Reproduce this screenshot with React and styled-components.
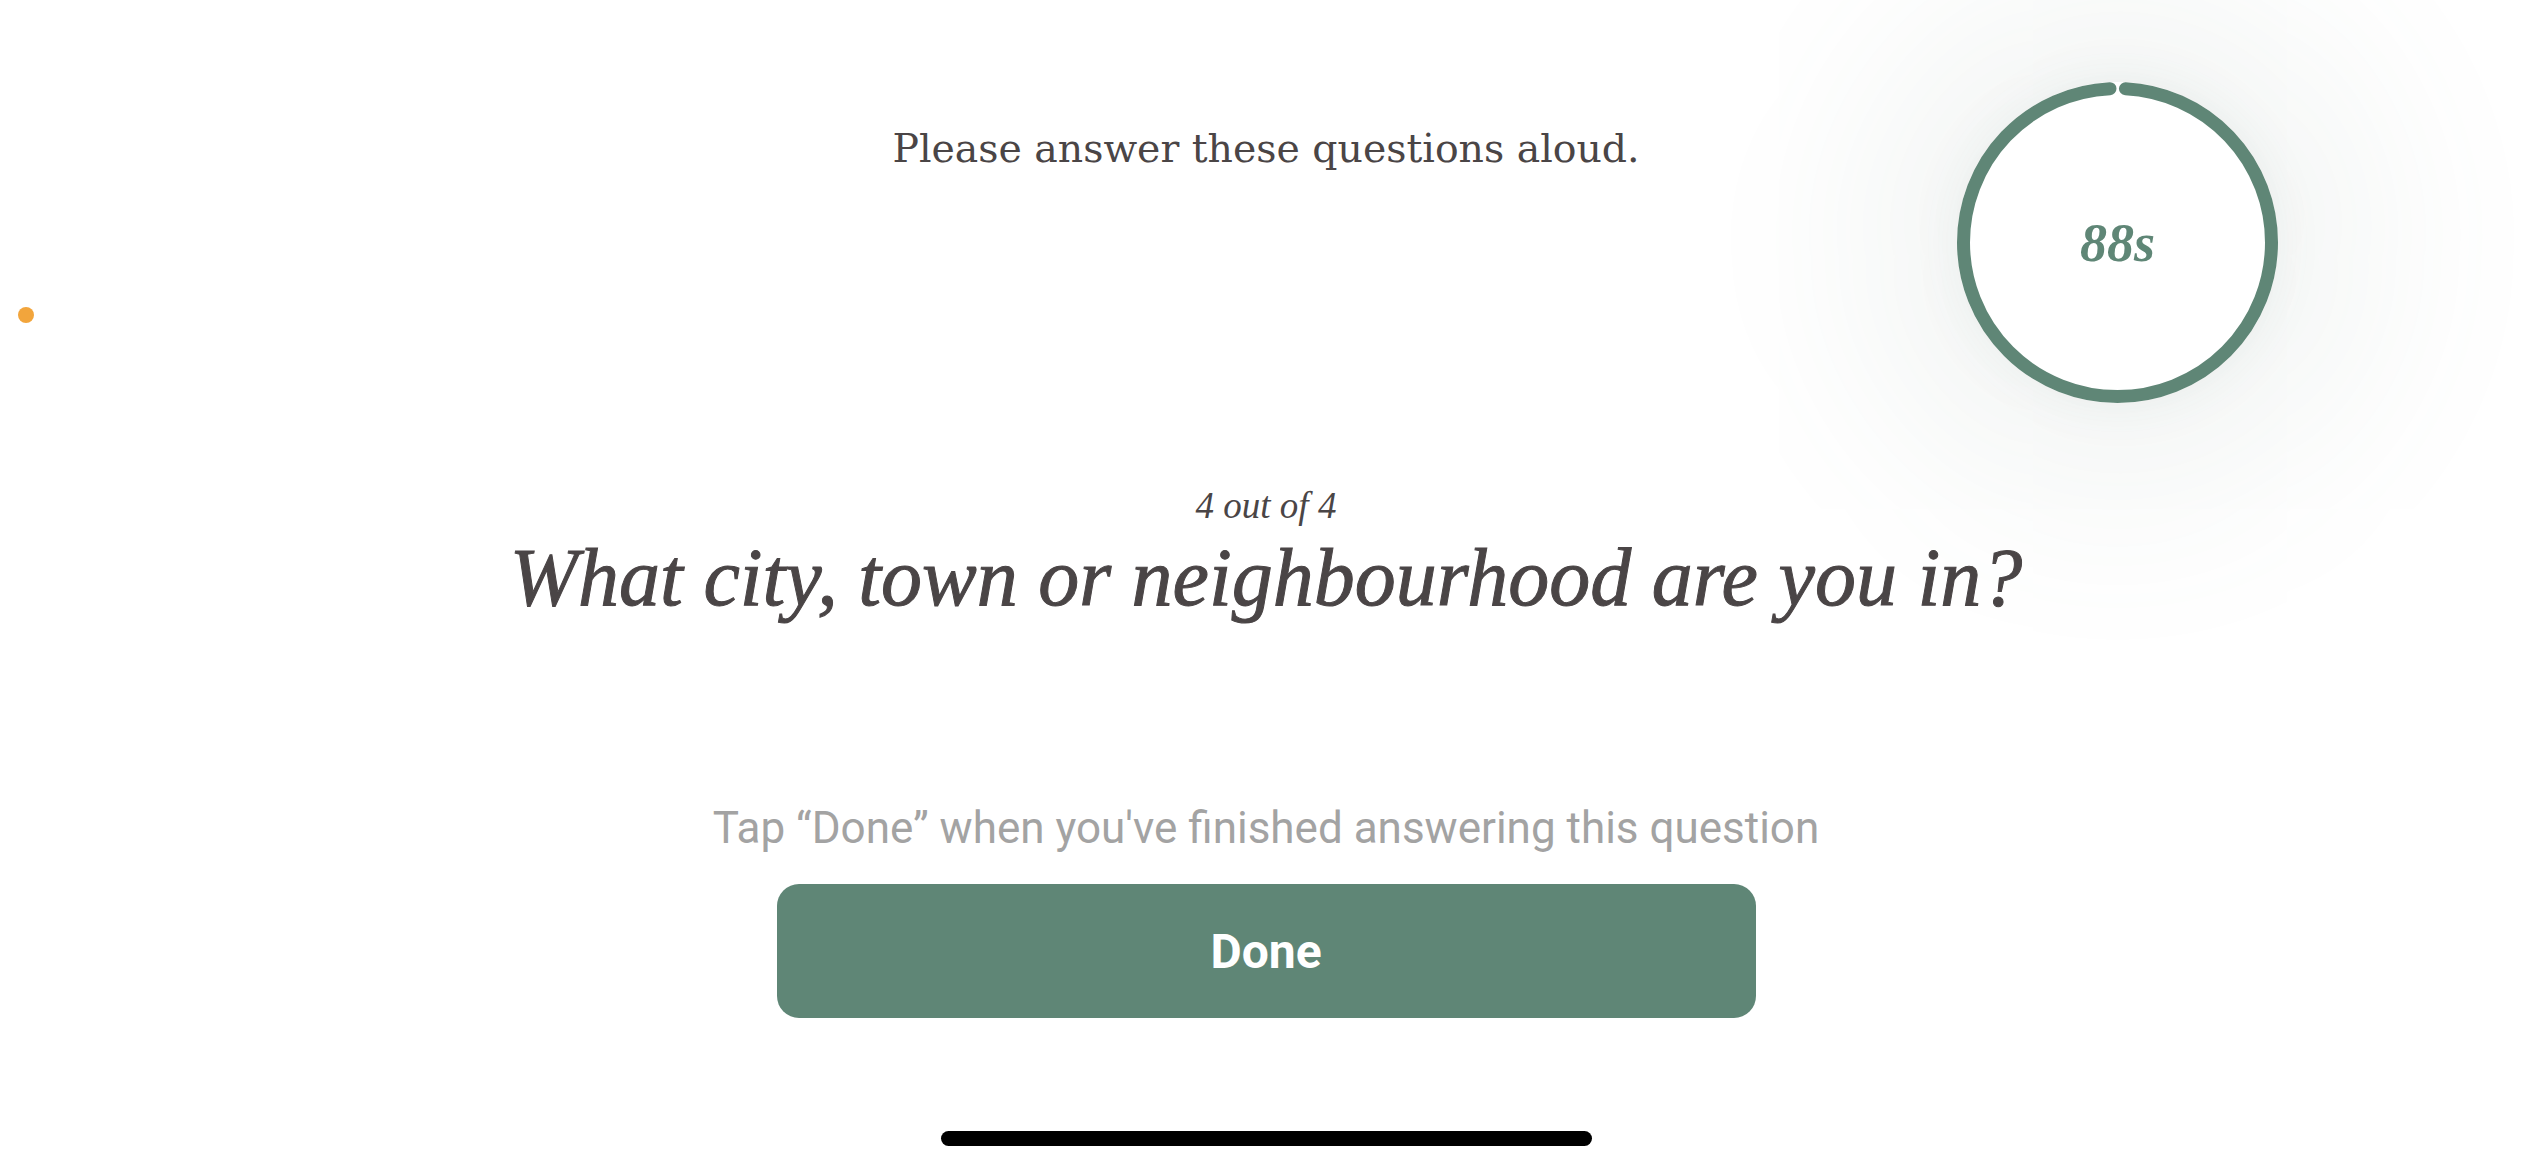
import React from "react";
import styled, { createGlobalStyle } from "styled-components";

const GlobalStyle = createGlobalStyle`
  html, body {
    margin: 0;
    padding: 0;
    background: #ffffff;
  }
  #root {
    height: 100vh;
  }
`;

const Screen = styled.div`
  position: relative;
  width: 2532px;
  height: 1170px;
  overflow: hidden;
  background: #fff;
  display: flex;
  flex-direction: column;
  align-items: center;
`;

const Intro = styled.p`
  margin: 120px 0 0;
  font-family: "DejaVu Serif", "Liberation Serif", serif;
  font-size: 39.4px;
  line-height: 56px;
  color: #4a4546;
`;

const QuestionBlock = styled.div`
  margin-top: 308px;
  display: flex;
  flex-direction: column;
  align-items: center;
`;

const Counter = styled.span`
  font-family: "Liberation Serif", "DejaVu Serif", serif;
  font-style: italic;
  font-size: 37px;
  line-height: 44px;
  color: #4a4546;
`;

const Question = styled.h1`
  margin: 0;
  font-family: "Liberation Serif", "DejaVu Serif", serif;
  font-style: italic;
  font-weight: 400;
  font-size: 82px;
  line-height: 100px;
  color: #4a4546;
  -webkit-text-stroke: 1px #4a4546;
`;

const Hint = styled.p`
  margin: 174px 0 0;
  font-family: Roboto, "Liberation Sans", sans-serif;
  font-size: 44px;
  line-height: 52px;
  color: #a3a3a3;
`;

const DoneButton = styled.button`
  margin-top: 30px;
  width: 979px;
  height: 134px;
  border: none;
  border-radius: 22px;
  background: #5f8676;
  color: #fff;
  font-family: Roboto, "Liberation Sans", sans-serif;
  font-weight: 700;
  font-size: 48px;
  cursor: pointer;
`;

const HomeIndicator = styled.div`
  margin-top: auto;
  margin-bottom: 24px;
  width: 651px;
  height: 15px;
  border-radius: 8px;
  background: #000;
`;

const Dot = styled.span`
  position: absolute;
  left: 18px;
  top: 307px;
  width: 16px;
  height: 16px;
  border-radius: 50%;
  background: #f2a53c;
`;

const Timer = styled.div`
  position: absolute;
  left: 1957px;
  top: 82px;
  width: 321px;
  height: 321px;
  border-radius: 50%;
  background: #fff;
  box-shadow: 0 0 40px 10px rgba(95, 125, 110, 0.05),
    0 0 180px 110px rgba(95, 125, 110, 0.07);
  display: flex;
  align-items: center;
  justify-content: center;

  svg {
    position: absolute;
    inset: 0;
  }
`;

const TimerLabel = styled.span`
  position: relative;
  font-family: "Liberation Serif", "DejaVu Serif", serif;
  font-style: italic;
  font-weight: 700;
  font-size: 54px;
  color: #5f8676;
`;

const Ring = () => {
  const r = 154;
  const c = 2 * Math.PI * r;
  const gap = 3;
  return (
    <svg width="321" height="321" viewBox="0 0 321 321">
      <circle
        cx="160.5"
        cy="160.5"
        r={r}
        fill="none"
        stroke="#5f8676"
        strokeWidth="13"
        strokeLinecap="round"
        strokeDasharray={`${c - gap - 13} ${gap + 13}`}
        strokeDashoffset={-(gap + 13) / 2}
        transform="rotate(-90 160.5 160.5)"
      />
    </svg>
  );
};

export default function App() {
  return (
    <>
      <GlobalStyle />
      <Screen>
        <Dot />
        <Timer>
          <Ring />
          <TimerLabel>88s</TimerLabel>
        </Timer>
        <Intro>Please answer these questions aloud.</Intro>
        <QuestionBlock>
          <Counter>4 out of 4</Counter>
          <Question>What city, town or neighbourhood are you in?</Question>
        </QuestionBlock>
        <Hint>Tap “Done” when you've finished answering this question</Hint>
        <DoneButton>Done</DoneButton>
        <HomeIndicator />
      </Screen>
    </>
  );
}
